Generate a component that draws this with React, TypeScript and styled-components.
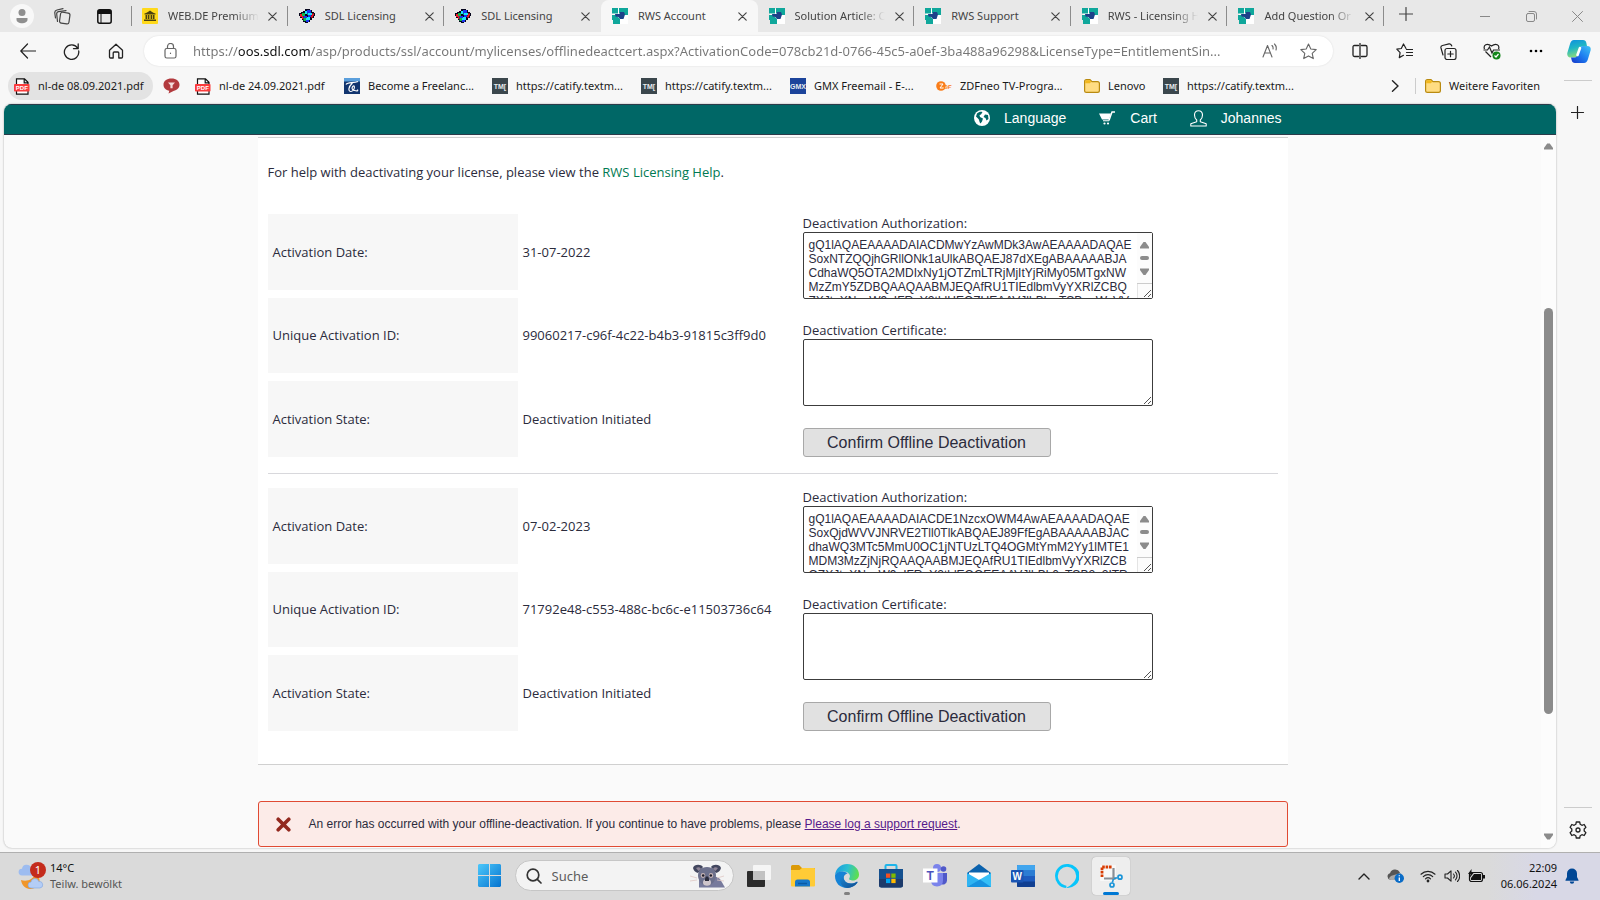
import React, { ReactNode } from 'react';
import styled, { createGlobalStyle, css } from 'styled-components';

const UI_FONT = '"Noto Sans", "Open Sans", sans-serif';
const PAGE_FONT = '"Open Sans", "Noto Sans", sans-serif';
const ARIAL = '"Liberation Sans", Arial, sans-serif';

const GlobalStyle = createGlobalStyle`
  *, *::before, *::after { box-sizing: border-box; }
  body { margin: 0; background: #f7f7f7; font-family: ${UI_FONT}; font-size: 11px; color: #222; }
  button, input, textarea { font-family: inherit; }
  svg { display: block; flex: none; }
`;

/* ---------- window ---------- */

const Desktop = styled.div`
  display: flex;
  flex-direction: column;
  min-height: 100vh;
  background: #f7f7f7;
`;

const plainButton = css`
  display: flex;
  align-items: center;
  justify-content: center;
  padding: 0;
  border: 0;
  background: none;
  color: inherit;
`;

const IconButton = styled.button<{ $w?: number }>`
  ${plainButton}
  flex: none;
  width: ${(p) => p.$w ?? 44}px;
  height: 28px;
`;

/* ---------- tab strip ---------- */

const TabStrip = styled.header`
  display: flex;
  height: 32px;
  background: #e8e8e8;
  color: #444;
`;

const StripTools = styled.div`
  display: flex;
  align-items: center;
  width: 131px;
  flex: none;
`;

const Tabs = styled.nav`
  display: grid;
  grid-template-columns: repeat(8, minmax(0, 1fr));
  flex: 0 1 1253px;
  background: linear-gradient(#8c8c8c, #8c8c8c) left center / 1px 20px no-repeat;
`;

const TabItem = styled.div<{ $active?: boolean; $divider?: boolean }>`
  display: flex;
  align-items: center;
  gap: 6px;
  padding: 0 7px 0 11px;
  background: ${(p) =>
    p.$active
      ? '#f7f7f7'
      : p.$divider
        ? 'linear-gradient(#8c8c8c, #8c8c8c) right center / 1px 20px no-repeat'
        : 'none'};
  border-radius: ${(p) => (p.$active ? '8px 8px 0 0' : '0')};
`;

const TabLabel = styled.button`
  ${plainButton}
  flex: 1;
  min-width: 0;
  gap: 10px;
  justify-content: flex-start;
  font-size: 11px;
  line-height: 16px;
`;

const TabText = styled.span<{ $fade?: boolean }>`
  flex: 1;
  text-align: left;
  overflow: hidden;
  white-space: nowrap;
  ${(p) => p.$fade && 'mask-image: linear-gradient(to right, #000 72%, transparent);'}
`;

const WindowControls = styled.div`
  display: flex;
  align-items: center;
  margin-left: auto;
  color: #888;
`;

/* ---------- toolbar ---------- */

const Toolbar = styled.div`
  display: flex;
  align-items: center;
  height: 38px;
  padding-left: 6px;
`;

const AddressBar = styled.div`
  display: flex;
  align-items: center;
  flex: 1;
  min-width: 0;
  height: 30px;
  margin: 0 5px 0 6px;
  padding: 0 6px 0 5px;
  border-radius: 15px;
  background: #fff;
  box-shadow: 0 0 2px rgba(0, 0, 0, 0.12);
  color: #666;
`;

const AddressInput = styled.input`
  flex: 1;
  min-width: 0;
  padding: 0;
  border: 0;
  outline: 0;
  font-size: 13px;
  line-height: 20px;
  color: transparent;
  background: linear-gradient(to right, #767676 46px, #111 46px 117px, #767676 117px);
  background-clip: text;
  -webkit-background-clip: text;
`;

/* ---------- favourites ---------- */

const Body = styled.div`
  display: flex;
  flex: 1;
`;

const MainColumn = styled.div`
  display: flex;
  flex-direction: column;
  flex: 1;
  min-width: 0;
  padding: 0 0 4px 4px;
`;

const Favourites = styled.nav`
  display: flex;
  align-items: center;
  gap: 4px;
  height: 34px;
  padding: 0 11px 2px 4px;
`;

const Favourite = styled.a<{ $w: number; $hover?: boolean }>`
  display: flex;
  align-items: center;
  gap: 8px;
  flex: none;
  width: ${(p) => p.$w}px;
  height: 28px;
  padding-left: 6px;
  border-radius: 14px;
  background: ${(p) => (p.$hover ? '#e3e3e3' : 'none')};
  color: #1a1a1a;
  font-size: 11px;
  line-height: 16px;
  text-decoration: none;
  white-space: nowrap;
`;

const FavouritesEnd = styled.div`
  display: flex;
  align-items: center;
  margin-left: auto;
`;

const FavDivider = styled.span`
  width: 1px;
  height: 16px;
  margin: 0 3px 0 10px;
  background: #ccc;
`;

const Sidebar = styled.aside`
  display: flex;
  flex-direction: column;
  align-items: center;
  width: 44px;
  padding: 10px 0 8px;
`;

const SideLine = styled.span<{ $push?: boolean }>`
  width: 28px;
  height: 1px;
  background: #ccc;
  margin: ${(p) => (p.$push ? 'auto 0 8px' : '0 0 18px')};
`;

/* ---------- web page ---------- */

const Viewport = styled.section`
  display: flex;
  flex-direction: column;
  flex: 1;
  border-radius: 8px;
  overflow: hidden;
  background: #fafafa;
  box-shadow: 0 0 2px rgba(0, 0, 0, 0.35);
`;

const SiteHeader = styled.div`
  height: 31px;
  padding-right: 15px;
  border: solid #2b3b4a;
  border-width: 1px 0;
  background: #006766;
`;

const SiteNav = styled.nav`
  display: flex;
  align-items: center;
  justify-content: flex-end;
  gap: 33px;
  max-width: 1030px;
  height: 26px;
  margin: 0 auto;
  padding-right: 6px;
`;

const SiteLink = styled.a`
  display: flex;
  align-items: center;
  gap: 14px;
  color: #fff;
  font: 14px/20px ${ARIAL};
  text-decoration: none;
`;

const ScrollArea = styled.div`
  display: flex;
  flex: 1;
`;

const Page = styled.main`
  flex: 1;
  min-width: 0;
  padding: 2px 0 1px;
  font-family: ${PAGE_FONT};
  font-size: 13px;
  color: #2b2b3c;
`;

const Card = styled.div`
  max-width: 1030px;
  margin: 0 auto;
  padding: 24px 10px 33px;
  border: solid #d0d0d0;
  border-width: 1px 0;
  background: #fff;
`;

const HelpText = styled.p`
  margin: 0 0 32px;
  line-height: 20px;

  a {
    color: #007a52;
    text-decoration: none;
  }
`;

const Activation = styled.section`
  display: grid;
  grid-template-columns: 535px minmax(0, 1fr);

  & + & {
    margin-top: 16px;
    padding-top: 14px;
    border-top: 1px solid #d8d8dc;
  }
`;

const Facts = styled.dl`
  display: grid;
  grid-template-columns: 250px minmax(0, 1fr);
  grid-auto-rows: 1fr;
  row-gap: 8px;
  margin: 0;
`;

const FactName = styled.dt`
  display: flex;
  align-items: center;
  padding: 0 5px;
  background: #f7f7f7;
`;

const FactValue = styled.dd`
  display: flex;
  align-items: center;
  margin: 0;
  padding: 0 5px;
`;

const Form = styled.form`
  display: flex;
  flex-direction: column;
  gap: 22px;
`;

const Field = styled.div`
  position: relative;
  display: flex;
  flex-direction: column;
  width: 350px;

  label {
    line-height: 18px;
  }
`;

const TextArea = styled.textarea`
  height: 67px;
  padding: 5px;
  border: 1px solid #3c3c3c;
  border-radius: 2px;
  background: #fff;
  color: #2b2b3c;
  font: 12px/14px ${ARIAL};
  white-space: pre;
  overflow: hidden;
  resize: none;
`;

const AreaDecor = styled.svg`
  position: absolute;
  right: 1px;
  bottom: 1px;
`;

const SubmitButton = styled.button`
  width: 248px;
  height: 29px;
  padding: 0;
  border: 1px solid #a8a8a8;
  border-radius: 3px;
  background: #e1e1e1;
  color: #2b2b3c;
  font: 16px/20px ${ARIAL};
`;

const ErrorBox = styled.div`
  display: flex;
  align-items: center;
  gap: 17px;
  max-width: 1030px;
  height: 46px;
  margin: 36px auto 0;
  padding: 0 17px;
  border: 1px solid #e04a33;
  border-radius: 3px;
  background: #fcebe8;
  font: 12px/16px ${ARIAL};

  a {
    color: #551a8b;
  }
`;

const Scrollbar = styled.div`
  display: flex;
  flex-direction: column;
  align-items: center;
  width: 15px;
  padding: 8px 0;
  background: #fcfcfc;
`;

const Thumb = styled.span`
  flex: 406;
  width: 9px;
  border-radius: 5px;
  background: #8b8b8b;
`;

const Track = styled.span<{ $part: number }>`
  flex: ${(p) => p.$part};
`;

/* ---------- taskbar ---------- */

const Taskbar = styled.footer`
  display: grid;
  grid-template-columns: 1fr auto 1fr;
  height: 48px;
  padding-bottom: 2px;
  border-top: 1px solid #b0b0b0;
  background: linear-gradient(to right, #dadada 93%, #d8d8e6 96%);
`;

const Weather = styled.button`
  ${plainButton}
  justify-content: flex-start;
  gap: 4px;
  padding-left: 18px;
  text-align: left;
  font-size: 11px;
  line-height: 16px;
  color: #555;

  b {
    display: block;
    font-weight: 400;
    color: #111;
  }
`;

const Apps = styled.div`
  display: flex;
  align-items: center;
  gap: 6px;
`;

const AppTile = styled.button<{ $open?: boolean }>`
  ${plainButton}
  position: relative;
  width: 38px;
  height: 38px;
  border-radius: 4px;
  ${(p) => p.$open && 'background: #eeeeee; box-shadow: 0 0 1px rgba(0, 0, 0, 0.35);'}
`;

const Running = styled.span<{ $active?: boolean }>`
  position: absolute;
  bottom: 0;
  left: 50%;
  width: ${(p) => (p.$active ? 16 : 6)}px;
  height: 3px;
  margin-left: ${(p) => (p.$active ? -8 : -3)}px;
  border-radius: 2px;
  background: ${(p) => (p.$active ? '#0078d4' : '#808080')};
`;

const Search = styled.label`
  display: flex;
  align-items: center;
  gap: 10px;
  width: 219px;
  height: 31px;
  padding: 0 7px 0 10px;
  border: 1px solid #c6c6c6;
  border-radius: 16px;
  background: #f3f3f3;
`;

const SearchInput = styled.input`
  flex: 1;
  min-width: 0;
  padding: 0;
  border: 0;
  outline: 0;
  background: none;
  font-size: 13px;
  line-height: 20px;

  &::placeholder {
    color: #5c5c5c;
    opacity: 1;
  }
`;

const Tray = styled.div`
  display: flex;
  align-items: center;
  justify-content: flex-end;
  gap: 8px;
  padding-right: 21px;
`;

const TrayButton = styled.button<{ $gap?: number }>`
  ${plainButton}
  margin-right: ${(p) => p.$gap ?? 0}px;
`;

const Clock = styled.time`
  text-align: right;
  font-size: 11px;
  line-height: 16px;
  color: #111;
  white-space: pre;
`;

/* ---------- icons ---------- */

type LineProps = { s?: number; w?: number; vb?: number; color?: string; children: ReactNode };

const Line = ({ s = 16, w = 1, vb, color = 'currentColor', children }: LineProps) => (
  <svg width={s} height={s} viewBox={`0 0 ${vb ?? s} ${vb ?? s}`} fill="none" stroke={color} strokeWidth={w} strokeLinecap="round" strokeLinejoin="round" aria-hidden>
    {children}
  </svg>
);

const Close = () => (
  <Line s={9} w={1.2}><path d="M.8.8l7.4 7.4M8.2.8L.8 8.2" /></Line>
);

const Bank = () => (
  <svg width="16" height="16" viewBox="0 0 16 16" aria-hidden>
    <rect width="16" height="16" rx="1" fill="#ffd91a" />
    <path d="M2.500 5.500C5 5 6 3.600 8 2.400c2 1.200 3 2.600 5.500 3.100V6.500h-11zM3.500 7h1.800v4H3.500zM6 7h1.400v4H6zM8.600 7H10v4H8.600zM10.700 7h1.800v4h-1.800zM2 11.500h12v1.400H2z" fill="#4a4010" />
  </svg>
);

const SdlIcon = () => (
  <svg width="16" height="14" viewBox="0 0 16 14" aria-hidden>
    <path d="M0 4h2V3h2V2h2V0h5v1h2v2h2v1h1v3h-1v2h-2v2h-2v2h-2v1H6v-1H4v-2H3V9H1V7H0z" fill="#05051c" />
    <path d="M1 5h2v3H1zM3 7h1.500v3H3z" fill="#f01824" />
    <path d="M3 4h3v3H3zM4.500 9H7v3H4.500z" fill="#0fb84c" />
    <path d="M6 2h2v3H6zM7 8h4v3H7z" fill="#19e4fb" />
    <path d="M8 1h4v3H8zM4.500 7H8v2H4.500zM9 6h3v2H9zM7 11h3v2H7z" fill="#1a34ee" />
    <path d="M8.500 4H13v2H8.500z" fill="#19e4fb" />
    <path d="M13 4.500h2v2h-1v2h-2V6.500h1z" fill="#f01824" />
  </svg>
);

const RwsIcon = () => (
  <svg width="16" height="16" viewBox="0 0 16 16" aria-hidden>
    <rect x="1" y="1" width="15" height="15" fill="#fff" />
    <path d="M0 0h6v5.500H0zM7 0h9v7h-5L7 5zM0 7h4l4 4v5H1v-4H0z" fill="#0fa79b" />
    <path d="M8 4h4l1 2.500-1.500 4.500H8L6.500 9 3.500 8.500 3 6l4.500 0z" fill="#1d4189" />
  </svg>
);

const PdfIcon = () => (
  <svg width="16" height="17" viewBox="0 0 16 17" aria-hidden>
    <path d="M2.500 6V.8h8L14 4.300V6M10.200.8v4h3.800M2.500 13v3.200H14V13" fill="#fff" stroke="#111" strokeWidth="1.200" />
    <rect x="0" y="6" width="15.500" height="7.500" rx=".8" fill="#fa3c3c" />
    <text x="7.800" y="12" fontSize="6" fontWeight="700" textAnchor="middle" fill="#fff" fontFamily="Liberation Sans">PDF</text>
  </svg>
);

const Balloon = () => (
  <svg width="17" height="16" viewBox="0 0 17 16" aria-hidden>
    <path d="M8.500.5c4.800 0 8 2.600 8 6.200 0 3.400-2.800 5.400-5.500 6L5.500 15.500l.8-2.800C3 12 .5 10 .5 6.700.5 3 3.700.5 8.500.5z" fill="#b23a3e" />
    <path d="M5 4.500h7L9.600 7.200v3H7.400v-3z" fill="#f3dcdc" />
  </svg>
);

const Translator = () => (
  <svg width="16" height="16" viewBox="0 0 16 16" aria-hidden>
    <rect width="16" height="16" fill="#12356f" />
    <rect width="16" height="3.500" fill="#5b9fdc" />
    <path d="M2 6.500C4 3.500 9 5.500 14 3.500M8.500 5C4 9 4 13.500 7 13.500s4-4.500 3-5.500-4 3.500.5 4.500 3-.5 3-1" fill="none" stroke="#fff" strokeWidth="1.200" />
  </svg>
);

const Badge = ({ bg, label, size }: { bg: string; label: string; size: number }) => (
  <svg width="16" height="16" viewBox="0 0 16 16" aria-hidden>
    <rect width="16" height="16" fill={bg} />
    <text x="8" y="10.500" fontSize={size} fontWeight="700" textAnchor="middle" fill="#e8ecee" fontFamily="Liberation Sans">{label}</text>
  </svg>
);

const Zdf = () => (
  <svg width="16" height="10" viewBox="0 0 16 10" aria-hidden>
    <circle cx="5" cy="5" r="4.800" fill="#fa7d19" />
    <path d="M3.500 3h3.500L4 7h4" fill="none" stroke="#fff" strokeWidth="1" />
    <text x="7.500" y="7.600" fontSize="6" fontWeight="700" fontStyle="italic" fill="#fa7d19" fontFamily="Liberation Sans">DF</text>
  </svg>
);

const Folder = () => (
  <svg width="16" height="14" viewBox="0 0 16 14" aria-hidden>
    <path d="M.6 2.500Q.6.6 2.500.6H6l2 2h5.500q1.900 0 1.900 1.900v7q0 1.900-1.900 1.900h-11Q.6 13.400.6 11.500z" fill="#ffdc82" stroke="#b98a10" strokeWidth="1.200" />
    <path d="M1.200 4.200V2.500q0-1.300 1.300-1.300h3.200l1.600 1.600-1.500 1.400z" fill="#f2b81d" />
  </svg>
);

const Copilot = () => (
  <svg width="24" height="23" viewBox="0 0 24 23" aria-hidden>
    <defs>
      <linearGradient id="cp1" x1="0" y1="0" x2="0.300" y2="1"><stop offset="0" stopColor="#0d8ee0" /><stop offset=".5" stopColor="#1fb6c4" /><stop offset="1" stopColor="#8bdc7c" /></linearGradient>
      <linearGradient id="cp2" x1="1" y1="0" x2="0" y2="1"><stop offset="0" stopColor="#3fc4f4" /><stop offset=".5" stopColor="#1d7df0" /><stop offset="1" stopColor="#1636c8" /></linearGradient>
    </defs>
    <path d="M7 0h9c2 0 2.800 1 3.300 2.800L20 6h-3.500c-2 0-3 1-3.500 3l-2 6c-.6 1.800-1.500 2.500-3 2.500H4C1 17.500 0 15.500.3 13L3 4C3.800 1.300 5 0 7 0z" fill="url(#cp1)" />
    <path d="M17 23H8c-2 0-2.800-1-3.300-2.800L4 17.500h3.500c2 0 3-1.500 3.500-3.500l2-5.500C13.600 6.700 14.500 6 16 6h4c3 0 4 1.500 3.700 4L21 19c-.8 2.700-2 4-4 4z" fill="url(#cp2)" />
    <path d="M13 8l-2.500 7" stroke="#fff" strokeWidth="2.600" strokeLinecap="round" />
  </svg>
);

const WeatherIcon = () => (
  <svg width="28" height="28" viewBox="0 0 28 28" aria-hidden>
    <path d="M3 18c5 2 13 0 14-7 6 4 7 13-2 15.500C9 28 4 25 3 18z" fill="#f0962a" />
    <path d="M4 13.500a3.400 3.400 0 0 1 0-6.800 4.600 4.600 0 0 1 9-.4 3.600 3.600 0 0 1 1 7.200z" fill="#9dbcf0" />
    <path d="M13 26a3 3 0 0 1 0-6 4 4 0 0 1 7.800-.5A3.300 3.300 0 0 1 22 26z" fill="#b4cdf6" stroke="#7ea4e0" strokeWidth=".6" />
    <circle cx="20" cy="8" r="8" fill="#c42b1c" />
    <text x="20" y="12" fontSize="11" textAnchor="middle" fill="#fff" fontFamily="Noto Sans">1</text>
  </svg>
);

const WindowsIcon = () => (
  <svg width="23" height="23" viewBox="0 0 23 23" aria-hidden>
    <defs><linearGradient id="win" x1="0" y1="0" x2="1" y2="1"><stop offset="0" stopColor="#4cc8fb" /><stop offset="1" stopColor="#0573cf" /></linearGradient></defs>
    <path d="M1 0h10v11H0V1zM12 0h10l1 1v10H12zM0 12h11v11H1l-1-1zM12 12h11v10l-1 1H12z" fill="url(#win)" />
  </svg>
);

const Koala = () => (
  <svg width="37" height="24" viewBox="0 0 37 24" aria-hidden>
    <path d="M10 15c6-4 17-4 21 0l5 8.500H10z" fill="#777a9c" />
    <path d="M4 4c1-4 8-4 10-1l-5 6C6 8 5 7 4 4zM32 4c-1-4-8-4-10-1l5 6c3-1 4-2 5-5z" fill="#42465e" />
    <path d="M7 4c2-1 4-1 5 1L9.500 7zM29 4c-2-1-4-1-5 1l2.500 2z" fill="#8e8496" />
    <path d="M18 3c6 0 9 4 9 8.500S23 22 18 22s-9-6-9-10.500S12 3 18 3z" fill="#6c708c" />
    <ellipse cx="14" cy="11.500" rx="2.200" ry="2.400" fill="#c9b7b8" /><ellipse cx="22" cy="11.500" rx="2.200" ry="2.400" fill="#c9b7b8" />
    <circle cx="14.200" cy="11.500" r="1.300" fill="#1e1e2c" /><circle cx="21.800" cy="11.500" r="1.300" fill="#1e1e2c" />
    <ellipse cx="18" cy="18.500" rx="4" ry="3.300" fill="#cfc6cb" />
    <path d="M18 12.500c1.800 0 2.200 2.500 2 4.500h-4c-.2-2 .2-4.500 2-4.500z" fill="#2a2b3a" />
    <path d="M8 14l-7-2M8 16l-7 1M28 14l7-2M28 16l7 1" stroke="#e0c8c4" strokeWidth=".8" />
  </svg>
);

const TaskView = () => (
  <svg width="24" height="22" viewBox="0 0 24 22" aria-hidden>
    <rect y="6" width="18" height="16" rx="1" fill="#2b2b2b" />
    <rect x="6" width="18" height="15" rx="1" fill="#f5f5f5" />
    <rect x="6" y="6" width="12" height="9" fill="#c2c2c2" />
  </svg>
);

const Explorer = () => (
  <svg width="24" height="22" viewBox="0 0 24 22" aria-hidden>
    <path d="M0 1.500Q0 0 1.500 0h6.500l3 3H24v5H0z" fill="#dc9a08" />
    <path d="M0 5h8.500l2.500-2h12q1 0 1 1v16.500q0 1-1 1H1q-1 0-1-1z" fill="#ffcb36" />
    <path d="M4 21.500V17q0-2.500 2.500-2.500h10Q19 14.500 19 17v4.500z" fill="#1677c9" />
    <path d="M7 18.500h9" stroke="#0a5aa4" strokeWidth="1.400" />
  </svg>
);

const Edge = () => (
  <svg width="24" height="24" viewBox="0 0 24 24" aria-hidden>
    <defs>
      <linearGradient id="e1" x1="0" y1=".3" x2="1" y2=".5"><stop offset="0" stopColor="#1a9be0" /><stop offset=".5" stopColor="#2cc0d0" /><stop offset="1" stopColor="#5fe04a" /></linearGradient>
      <linearGradient id="e2" x1="0" y1="0" x2="1" y2="1"><stop offset="0" stopColor="#1a8ddc" /><stop offset="1" stopColor="#114a8b" /></linearGradient>
    </defs>
    <path d="M0 11C1 4 6 0 12 0c7 0 12 5 12 10.500 0 3.500-2.500 6-6 6-2.500 0-4.500-1-3.700-2.300C16.500 11 13 7.500 8.500 7.500 4 7.500 1 9.500 0 11z" fill="url(#e1)" />
    <path d="M0 12c0-3 4-4.800 8-4.500 3 .2 4.500 2 4.500 2C9 9.500 8 13 9 15.500c1.500 4 7 5.500 12.500 2.500.7-.4 1.200.2.800.8C20 22 16 24 12 24 5 24 0 19 0 12z" fill="#1583d6" />
    <path d="M5 16c0-4 3-6.500 7.500-6.500C9 10.500 8 13 9 15.500c1.500 4 7 5.500 12.500 2.500.7-.4 1.200.2.800.8C20 22 16 24 13 24c-5 0-8-4-8-8z" fill="url(#e2)" />
  </svg>
);

const Store = () => (
  <svg width="24" height="24" viewBox="0 0 24 24" aria-hidden>
    <path d="M6.500 6V2q0-1 1-1h9q1 0 1 1v4" fill="none" stroke="#1fb5ea" strokeWidth="2" />
    <path d="M0 5h24v16q0 2.500-2.500 2.500h-19Q0 23.500 0 21z" fill="#14508f" />
    <path d="M0 15h24v6q0 2.500-2.500 2.500h-19Q0 23.500 0 21z" fill="#1c3a6a" />
    <rect x="7" y="9.500" width="4.300" height="4.300" fill="#f25022" /><rect x="12.300" y="9.500" width="4.300" height="4.300" fill="#7fba00" />
    <rect x="7" y="14.800" width="4.300" height="4.300" fill="#00a4ef" /><rect x="12.300" y="14.800" width="4.300" height="4.300" fill="#ffb900" />
  </svg>
);

const Teams = () => (
  <svg width="24" height="23" viewBox="0 0 24 23" aria-hidden>
    <circle cx="14" cy="4" r="4" fill="#7b83eb" /><circle cx="20.500" cy="5" r="2.800" fill="#5059c9" />
    <path d="M16 9h8v7.500a4 4 0 0 1-6 3.500z" fill="#5059c9" />
    <path d="M8 9h12v7q0 6.500-6 6.500T8 16z" fill="#7b83eb" />
    <rect y="4.500" width="14.500" height="14" fill="#fff" />
    <text x="7.200" y="15.500" fontSize="12" fontWeight="700" textAnchor="middle" fill="#4b53bc" fontFamily="Liberation Sans">T</text>
  </svg>
);

const Mail = () => (
  <svg width="24" height="23" viewBox="0 0 24 23" aria-hidden>
    <path d="M0 9L12 0l12 9v6H0z" fill="#0b62ad" />
    <path d="M2 8.500h20V14L12 17 2 14z" fill="#fff" />
    <path d="M0 9l13 7.500L0 23z" fill="#2fb4f2" /><path d="M24 9v14H0z" fill="#35bff7" /><path d="M0 23l13-7.500L24 23z" fill="#1793e0" />
  </svg>
);

const Word = () => (
  <svg width="24" height="22" viewBox="0 0 24 22" aria-hidden>
    <rect x="6" width="18" height="22" rx="1" fill="#1d5bbf" /><path d="M7 0h16q1 0 1 1v4.500H6V1q0-1 1-1z" fill="#41a5ee" />
    <path d="M6 5.500h18V11H6z" fill="#2b7cd3" /><path d="M6 16.500h18V21q0 1-1 1H7q-1 0-1-1z" fill="#103f91" />
    <rect y="5" width="12.500" height="12.500" rx="1" fill="#1a55b3" />
    <text x="6.200" y="14.500" fontSize="10" fontWeight="700" textAnchor="middle" fill="#fff" fontFamily="Liberation Sans">W</text>
  </svg>
);

const Alexa = () => (
  <svg width="24" height="24" viewBox="0 0 24 24" aria-hidden>
    <path d="M12 0a12 12 0 0 0-1.500 23.900c.6 0 .9-.3.900-.8v-1.400C7 21 2.800 17 2.800 12a9.200 9.200 0 0 1 18.400 0c0 5-4.700 9.300-10 11.900A12 12 0 1 0 12 0z" fill="#08c5fb" />
  </svg>
);

const Snip = () => (
  <svg width="24" height="24" viewBox="0 0 24 24" aria-hidden>
    <rect width="16" height="16" x="1" y="1" rx="1" fill="#f8f8f8" />
    <path d="M3 13V3h10" fill="none" stroke="#d83b01" strokeWidth="2.800" strokeDasharray="2.600 .8" />
    <path d="M14.500 4v12M5 14.500h12" stroke="#8a8f96" strokeWidth="2.200" fill="none" />
    <path d="M14.500 15l-1.200 3.500M15 14.500l3.500-.8" stroke="#1b95d8" strokeWidth="1.600" />
    <circle cx="21" cy="13.200" r="2" fill="none" stroke="#1b95d8" strokeWidth="1.700" /><circle cx="13" cy="21" r="2" fill="none" stroke="#1b95d8" strokeWidth="1.700" />
  </svg>
);

const Globe = () => (
  <svg width="16" height="16" viewBox="0 0 16 16" aria-hidden>
    <circle cx="8" cy="8" r="8" fill="#fff" />
    <path d="M3 3.500C5 1.500 7 1.500 8.500 2L7 4.500 5.500 5l.5 2 3 1.500-1 3-1.500 2C5 12 5.500 10 4.500 9L2 6.500zM11 4.500l3 .5.500 4-2 1.500-1-2.500-2-1z" fill="#006766" />
  </svg>
);

const Cart = () => (
  <svg width="17" height="14" viewBox="0 0 17 14" aria-hidden>
    <path d="M0 2.500h12L10 8.500H3zM4 9.300h6v1H4z" fill="#fff" />
    <path d="M10 9.500L13 1h3" fill="none" stroke="#fff" strokeWidth="1.400" />
    <circle cx="5.500" cy="12.500" r="1.100" fill="#fff" /><circle cx="9" cy="12.500" r="1.100" fill="#fff" />
  </svg>
);

const Person = () => (
  <Line s={17} w={1.100} color="#fff">
    <path d="M8.500.7c-2.500 0-4 1.800-4 4.300 0 2.300 1 4 2.200 5v1.800L.8 13.800V16h15.400v-2.200l-5.900-2V10c1.200-1 2.200-2.700 2.200-5 0-2.500-1.500-4.300-4-4.300z" />
  </Line>
);

const ErrorCross = () => (
  <svg width="16" height="15" viewBox="0 0 16 15" aria-hidden>
    <path d="M2.200 2.200l10.600 10.600M12.800 2.200L2.200 12.800" stroke="#93291f" strokeWidth="3.600" strokeLinecap="round" />
  </svg>
);

const Arrow = ({ down }: { down?: boolean }) => (
  <svg width="9" height="7" viewBox="0 0 9 7" aria-hidden>
    <path d={down ? 'M0 .500h9V2L5.800 6.500H3.200L0 2z' : 'M0 6.500h9V5L5.800.500H3.200L0 5z'} fill="#8b8b8b" />
  </svg>
);

/* ---------- data ---------- */

const tabs = [
  { icon: <Bank />, text: 'WEB.DE Premium', fade: true, divider: true },
  { icon: <SdlIcon />, text: 'SDL Licensing', divider: true },
  { icon: <SdlIcon />, text: 'SDL Licensing' },
  { icon: <RwsIcon />, text: 'RWS Account', active: true },
  { icon: <RwsIcon />, text: 'Solution Article: C', fade: true, divider: true },
  { icon: <RwsIcon />, text: 'RWS Support', divider: true },
  { icon: <RwsIcon />, text: 'RWS - Licensing H', fade: true, divider: true },
  { icon: <RwsIcon />, text: 'Add Question Or', fade: true, divider: true },
];

const TmIcon = () => <Badge bg="#3b474d" label="TM[" size={7} />;

const favourites = [
  { icon: <PdfIcon />, text: 'nl-de 08.09.2021.pdf', w: 145, hover: true },
  { icon: <Balloon />, text: '', w: 28 },
  { icon: <PdfIcon />, text: 'nl-de 24.09.2021.pdf', w: 145 },
  { icon: <Translator />, text: 'Become a Freelanc...', w: 144 },
  { icon: <TmIcon />, text: 'https://catify.textm...', w: 145 },
  { icon: <TmIcon />, text: 'https://catify.textm...', w: 145 },
  { icon: <Badge bg="#1c449b" label="GMX" size={7} />, text: 'GMX Freemail - E-...', w: 142 },
  { icon: <Zdf />, text: 'ZDFneo TV-Progra...', w: 144 },
  { icon: <Folder />, text: 'Lenovo', w: 75 },
  { icon: <TmIcon />, text: 'https://catify.textm...', w: 145 },
];

const activations = [
  {
    date: '31-07-2022',
    id: '99060217-c96f-4c22-b4b3-91815c3ff9d0',
    auth: [
      'gQ1lAQAEAAAADAIACDMwYzAwMDk3AwAEAAAADAQAE',
      'SoxNTZQQjhGRllONk1aUlkABQAEJ87dXEgABAAAAABJA',
      'CdhaWQ5OTA2MDIxNy1jOTZmLTRjMjItYjRiMy05MTgxNW',
      'MzZmY5ZDBQAAQAABMJEQAfRU1TIEdlbmVyYXRlZCBQ',
      'ZXJtaXNzaW9uIFRpY2tldHEQZUEAAVJlbBlzaTSBpaWcVV',
    ],
  },
  {
    date: '07-02-2023',
    id: '71792e48-c553-488c-bc6c-e11503736c64',
    auth: [
      'gQ1lAQAEAAAADAIACDE1NzcxOWM4AwAEAAAADAQAE',
      'SoxQjdWVVJNRVE2Tll0TlkABQAEJ89FfEgABAAAAABJAC',
      'dhaWQ3MTc5MmU0OC1jNTUzLTQ4OGMtYmM2Yy1lMTE1',
      'MDM3MzZjNjRQAAQAABMJEQAfRU1TIEdlbmVyYXRlZCB',
      'QZXJtaXNzaW9uIFRpY2tldEQOEEAAVJlbBh0zTSB2o2ITR',
    ],
  },
];

const URL_TEXT =
  'https://oos.sdl.com/asp/products/ssl/account/mylicenses/offlinedeactcert.aspx?ActivationCode=078cb21d-0766-45c5-a0ef-3ba488a96298&LicenseType=EntitlementSin...';

/* ---------- parts ---------- */

const ResizeGrip = () => (
  <AreaDecor width="9" height="9" viewBox="0 0 9 9" aria-hidden>
    <path d="M1 8L8 1M5 8l3-3" stroke="#555" strokeWidth="1" />
  </AreaDecor>
);

const AreaScrollbar = () => (
  <AreaDecor width="15" height="65" viewBox="0 0 15 65" aria-hidden>
    <rect width="15" height="65" fill="#fcfcfc" />
    <path d="M3 15.500h9V14L8.500 9h-2L3 14z" fill="#8b8b8b" />
    <rect x="3" y="23" width="9" height="4" rx="2" fill="#8b8b8b" />
    <path d="M3 35.500h9V37l-3.500 5h-2L3 37z" fill="#8b8b8b" />
    <path d="M0 65V50.500h15" fill="none" stroke="#ccc" />
    <path d="M7 64l7-7M11 64l3-3" stroke="#555" />
  </AreaDecor>
);

const ActivationBlock = ({ item, n }: { item: (typeof activations)[number]; n: number }) => (
  <Activation>
    <Facts>
      <FactName>Activation Date:</FactName>
      <FactValue>{item.date}</FactValue>
      <FactName>Unique Activation ID:</FactName>
      <FactValue>{item.id}</FactValue>
      <FactName>Activation State:</FactName>
      <FactValue>Deactivation Initiated</FactValue>
    </Facts>
    <Form onSubmit={(e) => e.preventDefault()}>
      <Field>
        <label htmlFor={`auth-${n}`}>Deactivation Authorization:</label>
        <TextArea id={`auth-${n}`} readOnly value={item.auth.join('\n')} />
        <AreaScrollbar />
      </Field>
      <Field>
        <label htmlFor={`cert-${n}`}>Deactivation Certificate:</label>
        <TextArea id={`cert-${n}`} />
        <ResizeGrip />
      </Field>
      <SubmitButton type="submit">Confirm Offline Deactivation</SubmitButton>
    </Form>
  </Activation>
);

export default function App() {
  return (
    <Desktop>
      <GlobalStyle />

      <TabStrip>
        <StripTools>
          <IconButton aria-label="Profil">
            <svg width="24" height="24" viewBox="0 0 24 24"><circle cx="12" cy="12" r="12" fill="#f8f8f8" /><circle cx="12" cy="8.500" r="3.500" fill="#8f8f8f" /><path d="M6.500 14h11v1.500c0 5-11 5-11 0z" fill="#8f8f8f" /></svg>
          </IconButton>
          <IconButton aria-label="Arbeitsbereiche" $w={36}>
            <Line s={17} w={1.200}><rect x="6" y="4.500" width="9.500" height="11" rx="2" transform="rotate(8 10 10)" /><path d="M3.500 13.500L2.700 6Q2.500 4 4.500 3.700L12 2.600M1.500 10L.8 5Q.5 2.500 3 2l6-1.300" /></Line>
          </IconButton>
          <IconButton $w={48} aria-label="Tab-Aktionen">
            <svg width="15" height="15" viewBox="0 0 15 15"><rect x=".8" y=".8" width="13.400" height="13.400" rx="2" fill="none" stroke="#111" strokeWidth="1.500" /><path d="M1 1h13v4H1z" fill="#111" /><path d="M4 5v9" stroke="#111" /></svg>
          </IconButton>
        </StripTools>
        <Tabs>
          {tabs.map((t, i) => (
            <TabItem key={i} $active={t.active} $divider={t.divider}>
              <TabLabel>
                {t.icon}
                <TabText $fade={t.fade}>{t.text}</TabText>
              </TabLabel>
              <IconButton $w={16} aria-label="Tab schließen"><Close /></IconButton>
            </TabItem>
          ))}
        </Tabs>
        <IconButton aria-label="Neuer Tab"><Line s={14} w={1.200}><path d="M7 .500v13M.500 7h13" /></Line></IconButton>
        <WindowControls>
          <IconButton aria-label="Minimieren" $w={46}><Line s={10}><path d="M0 5.500h10" /></Line></IconButton>
          <IconButton aria-label="Wiederherstellen" $w={46}><Line s={11}><rect x=".5" y="2.500" width="8" height="8" rx="1.500" /><path d="M3 .500h5Q10.500.500 10.500 3v5" /></Line></IconButton>
          <IconButton aria-label="Schließen" $w={46}><Line s={11}><path d="M.500.500l10 10M10.500.500l-10 10" /></Line></IconButton>
        </WindowControls>
      </TabStrip>

      <Toolbar>
        <IconButton aria-label="Zurück"><Line s={16} w={1.200}><path d="M15.500 8H.8M7.500 1L.8 8l6.700 7" /></Line></IconButton>
        <IconButton aria-label="Aktualisieren"><Line s={18} w={1.300}><path d="M14.800 6.500A7.200 7.200 0 1 0 15.700 9M15.200 2v4.700h-4.700" /></Line></IconButton>
        <IconButton aria-label="Startseite"><Line s={16} w={1.300}><path d="M1.500 7.200L8 1.200l6.500 6V14q0 1-1 1h-2.700V10q0-1-1-1H6.200q-1 0-1 1v5H2.500q-1 0-1-1z" /></Line></IconButton>
        <AddressBar>
          <IconButton aria-label="Websiteinformationen">
            <Line s={16} w={1.200}><rect x="2" y="5.500" width="11" height="9.500" rx="1.800" /><path d="M4.500 5.500V3.500a3 3 0 0 1 6 0v2M7.500 10v.5" /></Line>
          </IconButton>
          <AddressInput aria-label="Adresse" defaultValue={URL_TEXT} />
          <IconButton $w={38} aria-label="Vorlesen">
            <Line s={16} w={1.100}><path d="M1 14L5.500 2.500 10 14M2.600 10h5.800M10 2.500q1.500 1.500 1 3.500M12.500 1q2.500 2.500 1.500 6" /></Line>
          </IconButton>
          <IconButton $w={38} aria-label="Favorit">
            <Line s={17} w={1.100}><path d="M8.500 1l2.300 5 5.400.6-4 3.700 1.100 5.300-4.800-2.700-4.800 2.700 1.100-5.300-4-3.700L6.200 6z" /></Line>
          </IconButton>
        </AddressBar>
        <IconButton aria-label="Geteilter Bildschirm"><Line s={16} w={1.300}><path d="M6.500 2.500h-4Q1 2.500 1 4v8q0 1.500 1.500 1.500h4M9.500 2.500h4Q15 2.500 15 4v8q0 1.500-1.500 1.500h-4M8 .500v15" /></Line></IconButton>
        <IconButton aria-label="Favoriten"><Line s={17} w={1.200}><path d="M10 5.500L7.500 1 5.300 5.500.8 6.200l3.300 3.400-.8 5 4.200-2.300M10.500 6.500h6M10.500 9.500h6M10.500 12.500h6" /></Line></IconButton>
        <IconButton aria-label="Sammlungen"><Line s={17} w={1.200}><rect x="5" y="5.500" width="11" height="11" rx="2" /><path d="M10.500 8.300v5.400M7.800 11h5.400M3 12L1 5Q.5 3 2.500 2.500L9 .9Q11 .5 11.800 3" /></Line></IconButton>
        <IconButton aria-label="Browser-Essentials">
          <svg width="18" height="18" viewBox="0 0 18 18" fill="none" stroke="#222" strokeWidth="1.200"><path d="M1.500 7C0 3 4 .5 8.500 4 13 .5 17 3 15.500 7M2.500 9.500l5.500 5.500M.5 8h4L6.500 5l2.500 6 1.500-3H17" /><circle cx="13.500" cy="13.500" r="4" fill="#13851a" stroke="none" /><path d="M11.500 13.500l1.500 1.500 2.500-3" stroke="#fff" /></svg>
        </IconButton>
        <IconButton aria-label="Mehr"><svg width="14" height="4" viewBox="0 0 14 4"><circle cx="2" cy="2" r="1.300" /><circle cx="7" cy="2" r="1.300" /><circle cx="12" cy="2" r="1.300" /></svg></IconButton>
        <IconButton $w={42} aria-label="Copilot"><Copilot /></IconButton>
      </Toolbar>

      <Body>
        <MainColumn>
          <Favourites>
            {favourites.map((f, i) => (
              <Favourite key={i} href="#" $w={f.w} $hover={f.hover} aria-label={f.text || 'Favorit'}>
                {f.icon}
                {f.text}
              </Favourite>
            ))}
            <FavouritesEnd>
              <IconButton $w={20} aria-label="Weitere anzeigen"><Line s={12} w={1.400}><path d="M3.500.800L9 6l-5.500 5.200" /></Line></IconButton>
              <FavDivider />
              <Favourite href="#" $w={126}><Folder />Weitere Favoriten</Favourite>
            </FavouritesEnd>
          </Favourites>

          <Viewport>
            <SiteHeader>
              <SiteNav>
                <SiteLink href="#"><Globe />Language</SiteLink>
                <SiteLink href="#"><Cart />Cart</SiteLink>
                <SiteLink href="#"><Person />Johannes</SiteLink>
              </SiteNav>
            </SiteHeader>
            <ScrollArea>
              <Page>
                <Card>
                  <HelpText>
                    For help with deactivating your license, please view the <a href="#">RWS Licensing Help</a>.
                  </HelpText>
                  {activations.map((a, i) => (
                    <ActivationBlock key={a.id} item={a} n={i} />
                  ))}
                </Card>
                <ErrorBox role="alert">
                  <ErrorCross />
                  <span>
                    An error has occurred with your offline-deactivation. If you continue to have problems, please{' '}
                    <a href="#">Please log a support request</a>.
                  </span>
                </ErrorBox>
              </Page>
              <Scrollbar>
                <Arrow />
                <Track $part={158} />
                <Thumb />
                <Track $part={119} />
                <Arrow down />
              </Scrollbar>
            </ScrollArea>
          </Viewport>
        </MainColumn>

        <Sidebar>
          <SideLine />
          <IconButton $w={28} aria-label="Hinzufügen"><Line s={14} w={1.200}><path d="M6.500.500v12M.500 6.500h12" /></Line></IconButton>
          <SideLine $push />
          <IconButton $w={28} aria-label="Einstellungen">
            <Line s={18} w={1.300}><path d="M7.300 1h3.400l.5 2.300 1.700 1 2.300-.8 1.700 2.900L15.200 8v2l1.700 1.600-1.700 2.900-2.300-.8-1.700 1-.5 2.300H7.300l-.5-2.300-1.700-1-2.300.8-1.700-2.900L2.800 10V8L1.100 6.400l1.700-2.900 2.300.8 1.700-1z" /><circle cx="9" cy="9" r="2" /></Line>
          </IconButton>
        </Sidebar>
      </Body>

      <Taskbar>
        <Weather>
          <WeatherIcon />
          <span><b>14°C</b>Teilw. bewölkt</span>
        </Weather>
        <Apps>
          <AppTile aria-label="Start"><WindowsIcon /></AppTile>
          <Search>
            <Line s={16} w={1.700} color="#333"><circle cx="7" cy="7" r="5.800" /><path d="M11.300 11.300L15 15" /></Line>
            <SearchInput placeholder="Suche" aria-label="Suche" />
            <Koala />
          </Search>
          <AppTile aria-label="Aktive Anwendungen"><TaskView /></AppTile>
          <AppTile aria-label="Explorer"><Explorer /></AppTile>
          <AppTile aria-label="Edge"><Edge /><Running /></AppTile>
          <AppTile aria-label="Store"><Store /></AppTile>
          <AppTile aria-label="Teams"><Teams /></AppTile>
          <AppTile aria-label="Mail"><Mail /></AppTile>
          <AppTile aria-label="Word"><Word /></AppTile>
          <AppTile aria-label="Alexa"><Alexa /></AppTile>
          <AppTile aria-label="Snipping Tool" $open><Snip /><Running $active /></AppTile>
        </Apps>
        <Tray>
          <TrayButton $gap={9} aria-label="Ausgeblendete Symbole"><Line s={12} w={1.400}><path d="M1 9l5-5 5 5" /></Line></TrayButton>
          <TrayButton $gap={8} aria-label="OneDrive">
            <svg width="17" height="15" viewBox="0 0 17 15"><path d="M3.500 12a3.500 3.500 0 0 1-.5-6.800A5.500 5.500 0 0 1 13 4.500L8 12z" fill="#555" /><path d="M2 11.500c0-3 3-4 5-4.500l7-2v4l-6 3H4z" fill="#a8a8a8" /><circle cx="12.300" cy="10.300" r="4.700" fill="#0a6cc7" /><path d="M12.300 7.300v1M12.300 9.500v3.500" stroke="#fff" strokeWidth="1.300" /></svg>
          </TrayButton>
          <TrayButton aria-label="WLAN"><Line s={16} w={1.200} color="#222"><path d="M1 6.200a10 10 0 0 1 14 0M3.300 8.600a6.700 6.700 0 0 1 9.400 0M5.500 10.900a3.600 3.600 0 0 1 5 0" /><circle cx="8" cy="13" r=".8" fill="#222" /></Line></TrayButton>
          <TrayButton aria-label="Lautstärke"><Line s={16} w={1.100} color="#222"><path d="M1 6h2.500L7 2.800v10.400L3.500 10H1zM9.500 6a3 3 0 0 1 0 4M11.500 4.200a5.500 5.500 0 0 1 0 7.600M13.500 2.500a8 8 0 0 1 0 11" /></Line></TrayButton>
          <TrayButton $gap={8} aria-label="Akku">
            <svg width="17" height="13" viewBox="0 0 17 13"><rect x="1.500" y="3.500" width="13" height="9" rx="2" fill="none" stroke="#111" strokeWidth="1.200" /><path d="M6 5h7v6H3V9zM15 6h2v3.500h-2z" fill="#111" /><path d="M3.500 0L0 5h2.500L1.500 9 6 3.500H3.500z" fill="#111" /></svg>
          </TrayButton>
          <Clock>{'22:09\n06.06.2024'}</Clock>
          <TrayButton aria-label="Benachrichtigungen">
            <svg width="14" height="16" viewBox="0 0 14 16"><path d="M7 .500a5 5 0 0 1 5 5V9l1.500 3v.800H.500V12L2 9V5.500a5 5 0 0 1 5-5zM4.800 13.600h4.400a2.200 2.200 0 0 1-4.400 0z" fill="#004795" /></svg>
          </TrayButton>
        </Tray>
      </Taskbar>
    </Desktop>
  );
}
